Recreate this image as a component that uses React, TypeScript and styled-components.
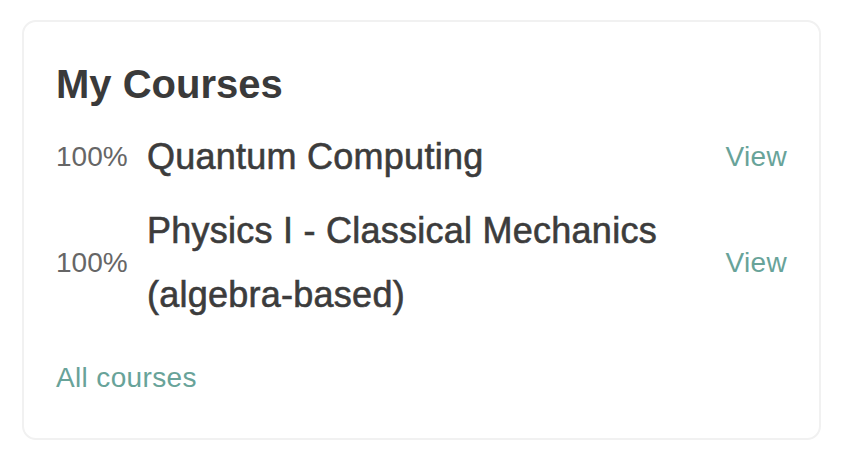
import { createGlobalStyle } from 'styled-components';
import styled from 'styled-components';

const GlobalStyle = createGlobalStyle`
  html, body {
    margin: 0;
    padding: 0;
    background: #ffffff;
  }
  body {
    font-family: "Liberation Sans", Arial, Helvetica, sans-serif;
    color: #3c3c3c;
  }
`;

const Page = styled.div`
  padding: 20px 27px 18px 22px;
`;

const Card = styled.section`
  border: 2px solid #f1f1f1;
  border-radius: 14px;
  padding: 38px 32px 40px 32px;
  background: #fff;
`;

const Title = styled.h2`
  margin: 0 0 12px;
  font-size: 40px;
  line-height: 48px;
  font-weight: 700;
  color: #3a3a3a;
`;

const List = styled.ul`
  list-style: none;
  margin: 0 0 26px;
  padding: 0;
`;

const Row = styled.li`
  display: flex;
  align-items: center;
  padding: 5px 0;
`;

const Progress = styled.span`
  flex: 0 0 auto;
  width: 91px;
  font-size: 28px;
  color: #666;
`;

const Name = styled.span`
  flex: 1;
  font-size: 36px;
  line-height: 64px;
  font-weight: 500;
  letter-spacing: 0.25px;
  color: #3c3c3c;
  -webkit-text-stroke: 0.6px #3c3c3c;
  padding-right: 40px;
`;

const Link = styled.a`
  font-size: 28px;
  line-height: 40px;
  letter-spacing: 0.35px;
  color: #68a399;
  text-decoration: none;
  cursor: pointer;
`;

const courses = [
  { id: 1, name: 'Quantum Computing', progress: 100 },
  { id: 2, name: 'Physics I - Classical Mechanics (algebra-based)', progress: 100 },
];

export default function App() {
  return (
    <>
      <GlobalStyle />
      <Page>
        <Card>
          <Title>My Courses</Title>
          <List>
            {courses.map((c) => (
              <Row key={c.id}>
                <Progress>{c.progress}%</Progress>
                <Name>{c.name}</Name>
                <Link>View</Link>
              </Row>
            ))}
          </List>
          <Link>All courses</Link>
        </Card>
      </Page>
    </>
  );
}
